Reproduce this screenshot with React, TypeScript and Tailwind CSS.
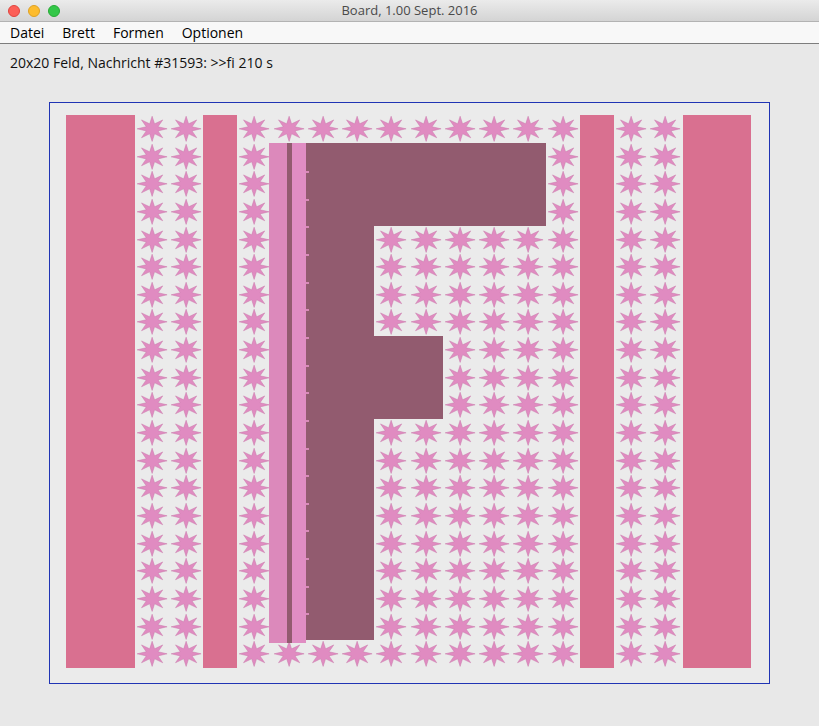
import { FC } from "react";

const CELL_W = 34.25;
const CELL_H = 27.65;

// 8-point star, stretched to fit one board cell
const starPoints = Array.from({ length: 16 }, (_, k) => {
  const a = ((-90 + k * 22.5) * Math.PI) / 180;
  const rx = k % 2 === 0 ? 15 : 6.4;
  const ry = k % 2 === 0 ? 12.6 : 5.4;
  return `${(CELL_W / 2 + rx * Math.cos(a)).toFixed(2)},${(CELL_H / 2 + ry * Math.sin(a)).toFixed(2)}`;
}).join(" ");

const Star: FC = () => (
  <svg viewBox={`0 0 ${CELL_W} ${CELL_H}`} className="w-full h-full block">
    <polygon points={starPoints} fill="#e08bc1" stroke="#c97aa9" strokeWidth="0.5" />
  </svg>
);

const TitleBar: FC = () => (
  <div className="relative h-[22px] flex items-center justify-center bg-gradient-to-b from-[#ebebeb] to-[#d4d4d4] border-b border-[#b3b3b3]">
    <div className="absolute left-[8px] top-[5px] flex gap-[8px]">
      <span className="w-[12px] h-[12px] rounded-full bg-[#fc5f57] border border-[#e0443e]" />
      <span className="w-[12px] h-[12px] rounded-full bg-[#fdbc2e] border border-[#dea123]" />
      <span className="w-[12px] h-[12px] rounded-full bg-[#33c748] border border-[#27aa35]" />
    </div>
    <span className="text-[13px] text-[#4a4a4a]">Board, 1.00 Sept. 2016</span>
  </div>
);

const MenuBar: FC = () => (
  <div className="h-[22px] flex items-center gap-[18px] pl-[10px] bg-[#f8f8f8] border-b border-[#7d7d7d] text-[14px] text-black">
    <span>Datei</span>
    <span>Brett</span>
    <span>Formen</span>
    <span>Optionen</span>
  </div>
);

const Board: FC = () => {
  const ticks = Array.from({ length: 17 });
  return (
    <div className="grid w-[685px] h-[553px]">
      {/* background: a star in every cell */}
      <div className="[grid-area:1/1] grid grid-cols-[repeat(20,34.25px)] grid-rows-[repeat(20,27.65px)]">
        {Array.from({ length: 400 }).map((_, i) => (
          <Star key={i} />
        ))}
      </div>
      {/* pieces on top */}
      <div className="[grid-area:1/1] grid grid-cols-[repeat(20,34.25px)] grid-rows-[repeat(20,27.65px)]">
        <div className="col-start-1 col-span-2 row-start-1 row-span-20 bg-[#d97090]" />
        <div className="col-start-5 col-span-1 row-start-1 row-span-20 bg-[#d97090]" />
        <div className="col-start-16 col-span-1 row-start-1 row-span-20 bg-[#d97090]" />
        <div className="col-start-19 col-span-2 row-start-1 row-span-20 bg-[#d97090]" />

        <div className="col-start-7 col-span-1 row-start-2 row-span-18 -ml-[2.5px] -mb-[2.6px] flex">
          <div className="w-[17.7px] bg-[#dc89bb]" />
          <div className="w-[5px] bg-[#925b6f]" />
          <div className="flex-1 bg-[#e08dc3]" />
        </div>

        <div className="col-start-8 col-span-7 row-start-2 row-span-3 bg-[#925b6f]" />
        <div className="col-start-10 col-span-2 row-start-9 row-span-3 bg-[#925b6f]" />
        <div className="col-start-8 col-span-2 row-start-2 row-span-18 bg-[#925b6f] flex flex-col pt-[28.5px] gap-[25.65px]">
          {ticks.map((_, i) => (
            <span key={i} className="w-[3px] h-[2px] bg-[#d98ab9]" />
          ))}
        </div>
      </div>
    </div>
  );
};

const App: FC = () => {
  return (
    <div className="w-[819px] h-[726px] bg-[#e8e8e8] font-['Open_Sans',Arial,sans-serif] overflow-hidden">
      <TitleBar />
      <MenuBar />
      <div className="h-[37px] flex items-center pl-[10px] text-[14px] text-[#111]">
        20x20 Feld, Nachricht #31593: &gt;&gt;fi 210 s
      </div>
      <div className="mt-[21px] ml-[49px] w-[721px] h-[582px] border border-[#2034b4] bg-[#ebebeb] pl-[16px] pt-[12px]">
        <Board />
      </div>
    </div>
  );
};

export default App;
